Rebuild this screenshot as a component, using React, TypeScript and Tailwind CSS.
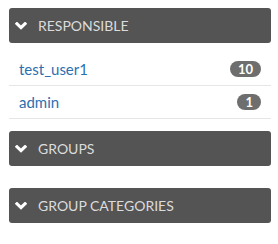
const users = [
  { name: "test_user1", count: 10 },
  { name: "admin", count: 1 },
]

function Chevron() {
  return (
    <svg width="12" height="8" viewBox="0 0 12 8" className="shrink-0">
      <path d="M2 1.8 L6 5.6 L10 1.8" fill="none" stroke="white" strokeWidth="3.2" strokeLinecap="square" />
    </svg>
  )
}

function SectionHeader({ title }: { title: string }) {
  return (
    <div className="flex h-[35px] items-center gap-[11px] rounded-[3px] bg-[#545454] pl-[6px] text-[14px] text-[#dcdcdc]">
      <Chevron />
      <span>{title}</span>
    </div>
  )
}

export default function App() {
  return (
    <div className="w-[278px] h-[244px] bg-white px-[9px] pt-[8px] font-['Lato',sans-serif] pr-[7px]">
      <SectionHeader title="RESPONSIBLE" />
      <ul className="mt-[10px]">
        {users.map((u) => (
          <li key={u.name} className="flex h-[33px] items-center justify-between border-b border-[#e6e6e6] pl-[10px] pr-[10px]">
            <a className="text-[15px] text-[#2d6fb0]">{u.name}</a>
            <span className="rounded-full bg-[#6e6e6e] px-[8px] text-[13px] font-bold leading-[16px] text-white">{u.count}</span>
          </li>
        ))}
      </ul>
      <div className="mt-[12px] flex flex-col gap-[22px]">
        <SectionHeader title="GROUPS" />
        <SectionHeader title="GROUP CATEGORIES" />
      </div>
    </div>
  )
}
